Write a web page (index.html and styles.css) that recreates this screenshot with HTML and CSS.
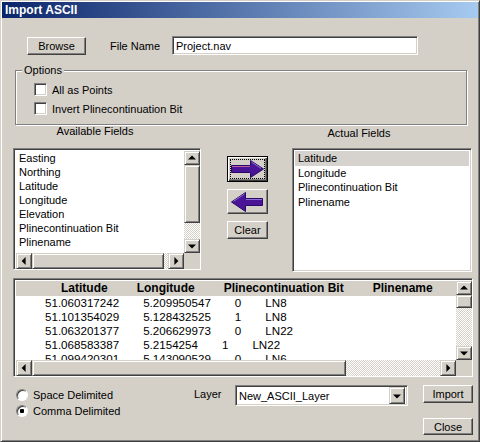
FILE: index.html
```html
<!DOCTYPE html>
<html>
<head>
<meta charset="utf-8">
<title>Import ASCII</title>
<link rel="stylesheet" href="styles.css">
</head>
<body>
<div class="win">
  <div class="title">Import ASCII</div>

  <div class="row-file">
    <div class="btn browse">Browse</div>
    <span class="lbl-file">File Name</span>
    <div class="field textfield">Project.nav</div>
  </div>

  <div class="group">
    <span class="legend">Options</span>
    <div class="chk"><span class="box"></span><span>All as Points</span></div>
    <div class="chk"><span class="box"></span><span>Invert Plinecontinuation Bit</span></div>
  </div>

  <div class="captions">
    <span class="cap-avail">Available Fields</span>
    <span class="cap-actual">Actual Fields</span>
  </div>

  <div class="lists">
    <div class="field listbox avail">
      <div class="items">
        <div class="item">Easting</div>
        <div class="item">Northing</div>
        <div class="item">Latitude</div>
        <div class="item">Longitude</div>
        <div class="item">Elevation</div>
        <div class="item">Plinecontinuation Bit</div>
        <div class="item">Plinename</div>
      </div>
      <div class="vscroll">
        <div class="sb-btn up"></div>
        <div class="thumb" style="height:58px"></div>
        <div class="track"></div>
        <div class="sb-btn down"></div>
      </div>
      <div class="hscroll">
        <div class="sb-btn left"></div>
        <div class="thumb" style="width:132px"></div>
        <div class="track"></div>
        <div class="sb-btn right"></div>
      </div>
      <div class="corner"></div>
    </div>

    <div class="mid">
      <div class="abtn default">
        <span class="focus">
          <svg width="33" height="18" viewBox="0 0 33 18">
            <polygon points="0.5,5.5 19.5,5.5 19.5,0.5 32.5,9 19.5,17.5 19.5,12.5 0.5,12.5" fill="#4a1496" stroke="#2a0868" stroke-width="1"/>
            <line x1="1" y1="6.5" x2="19" y2="6.5" stroke="#c060a0" stroke-width="1"/>
            <line x1="20.5" y1="2" x2="30" y2="8.3" stroke="#9070d8" stroke-width="1"/>
          </svg>
        </span>
      </div>
      <div class="abtn">
        <svg width="33" height="20" viewBox="0 0 33 20">
          <polygon points="0.5,10 14.5,0.5 14.5,6.5 31.5,6.5 31.5,13.5 14.5,13.5 14.5,19.5" fill="#4a1496" stroke="#2a0868" stroke-width="1"/>
          <line x1="2.5" y1="9.3" x2="13.5" y2="2" stroke="#9070d8" stroke-width="1"/>
          <line x1="15" y1="7.5" x2="31" y2="7.5" stroke="#9070d8" stroke-width="1"/>
        </svg>
      </div>
      <div class="btn clear">Clear</div>
    </div>

    <div class="field listbox actual">
      <div class="item sel">Latitude</div>
      <div class="item">Longitude</div>
      <div class="item">Plinecontinuation Bit</div>
      <div class="item">Plinename</div>
    </div>
  </div>

  <div class="field grid">
    <div class="gbody">
      <div class="ghead">
        <span>Latitude</span><span>Longitude</span><span>Plinecontinuation Bit</span><span>Plinename</span>
      </div>
      <div class="grow"><span>51.060317242</span><span>5.209950547</span><span>0</span><span>LN8</span></div>
      <div class="grow"><span>51.101354029</span><span>5.128432525</span><span>1</span><span>LN8</span></div>
      <div class="grow"><span>51.063201377</span><span>5.206629973</span><span>0</span><span>LN22</span></div>
      <div class="grow"><span>51.068583387</span><span>5.2154254</span><span>1</span><span>LN22</span></div>
      <div class="grow"><span>51.099420301</span><span>5.143090529</span><span>0</span><span>LN6</span></div>
    </div>
    <div class="vscroll">
      <div class="sb-btn up"></div>
      <div class="thumb" style="height:13px"></div>
      <div class="track"></div>
      <div class="sb-btn down"></div>
    </div>
    <div class="hscroll">
      <div class="sb-btn left"></div>
      <div class="thumb" style="width:314px"></div>
      <div class="track"></div>
      <div class="sb-btn right"></div>
    </div>
    <div class="corner"></div>
  </div>

  <div class="bottom">
    <div class="radios">
      <div class="radio"><span class="circle"></span><span>Space Delimited</span></div>
      <div class="radio"><span class="circle on"></span><span>Comma Delimited</span></div>
    </div>
    <span class="lbl-layer">Layer</span>
    <div class="field combo">
      <span class="combo-text">New_ASCII_Layer</span>
      <div class="sb-btn down combo-btn"></div>
    </div>
    <div class="actions">
      <div class="btn import">Import</div>
      <div class="btn close">Close</div>
    </div>
  </div>
</div>
</body>
</html>
```
FILE: styles.css
```css
* { box-sizing: border-box; }
html, body { margin: 0; padding: 0; background: #d4d0c8; }
body {
  font-family: "Liberation Sans", Arial, sans-serif;
  font-size: 11px;
  color: #000;
}
.win {
  width: 480px;
  height: 442px;
  background: #d4d0c8;
  border: 1px solid;
  border-color: #d4d0c8 #404040 #404040 #d4d0c8;
  box-shadow: inset 1px 1px 0 #fff, inset -1px -1px 0 #808080;
  padding: 1px;
  overflow: hidden;
}
.title {
  height: 16px;
  line-height: 16px;
  padding-left: 3px;
  color: #fff;
  font-weight: bold;
  font-size: 12px;
  background: linear-gradient(to right, #0a246a, #a6caf0);
}

/* common raised / sunken */
.btn {
  background: #d4d0c8;
  border: 1px solid;
  border-color: #fff #404040 #404040 #fff;
  box-shadow: inset -1px -1px 0 #808080;
  display: flex;
  align-items: center;
  justify-content: center;
  font-size: 11px;
}
.field {
  background: #fff;
  border: 1px solid;
  border-color: #808080 #fff #fff #808080;
  box-shadow: inset 1px 1px 0 #404040, inset -1px -1px 0 #d4d0c8;
}

/* file row */
.row-file {
  display: flex;
  align-items: center;
  height: 19px;
  margin-top: 18px;
  padding-left: 25px;
}
.browse { width: 59px; height: 18px; }
.lbl-file { width: 62px; margin-left: 24px; font-size: 11px; }
.textfield {
  width: 246px;
  height: 19px;
  padding: 2px 3px;
  line-height: 14px;
}

/* options group */
.group {
  position: relative;
  margin-top: 15px;
  margin-left: 13px;
  width: 452px;
  height: 55px;
  border: 1px solid #808080;
  box-shadow: inset 1px 1px 0 #fff, 1px 1px 0 #fff;
  padding: 12px 0 0 18px;
}
.legend {
  position: absolute;
  left: 6px;
  top: -7px;
  padding: 0 2px;
  background: #d4d0c8;
  line-height: 13px;
}
.chk {
  display: flex;
  align-items: center;
  height: 13px;
  margin-bottom: 6px;
}
.box {
  width: 13px;
  height: 13px;
  background: #fff;
  border: 1px solid;
  border-color: #808080 #fff #fff #808080;
  box-shadow: inset 1px 1px 0 #404040, inset -1px -1px 0 #d4d0c8;
  margin-right: 5px;
}

/* captions */
.captions {
  display: flex;
  height: 23px;
  line-height: 13px;
}
.cap-avail { width: 186px; text-align: center; }
.cap-actual { width: 226px; margin-left: 58px; text-align: center; padding-top: 2px; }

/* lists */
.lists { display: flex; align-items: flex-start; }
.listbox { padding: 2px; }
.avail {
  margin-left: 11px;
  width: 188px;
  height: 122px;
  display: grid;
  grid-template-columns: 168px 16px;
  grid-template-rows: 102px 16px;
}
.items { overflow: hidden; padding-left: 3px; }
.item { line-height: 14px; height: 14px; white-space: nowrap; }
.actual {
  margin-left: 24px;
  width: 180px;
  height: 124px;
}
.actual .item { padding-left: 3px; height: 14.5px; line-height: 14.5px; }
.actual .item.sel { background: #d6d3ce; }

.mid {
  margin-left: 26px;
  margin-top: 8px;
  width: 41px;
  display: flex;
  flex-direction: column;
  gap: 7px;
}
.abtn {
  height: 26px;
  background: #d4d0c8;
  border: 1px solid;
  border-color: #fff #404040 #404040 #fff;
  box-shadow: inset -1px -1px 0 #808080;
  display: flex;
  align-items: center;
  justify-content: center;
}
.abtn + .abtn { height: 25px; }
.abtn.default {
  border: 1px solid #000;
  box-shadow: inset 1px 1px 0 #fff, inset -1px -1px 0 #404040, inset -2px -2px 0 #808080;
  padding: 3px;
}
.focus {
  flex: 1;
  height: 100%;
  outline: 1px dotted #000;
  display: flex;
  align-items: center;
  justify-content: center;
}
.clear { height: 18px; }

/* scrollbars */
.vscroll { display: flex; flex-direction: column; width: 16px; }
.hscroll { display: flex; height: 16px; }
.track {
  flex: 1;
  background: repeating-conic-gradient(#d4d0c8 0 25%, #fff 0 50%) 0 0 / 2px 2px;
}
.thumb, .sb-btn, .corner {
  background: #d4d0c8;
}
.thumb, .sb-btn {
  border: 1px solid;
  border-color: #d4d0c8 #404040 #404040 #d4d0c8;
  box-shadow: inset 1px 1px 0 #fff, inset -1px -1px 0 #808080;
  flex: none;
}
.vscroll .sb-btn { height: 14px; }
.hscroll .sb-btn { width: 16px; }
.sb-btn { position: relative; }
.sb-btn::after {
  content: "";
  position: absolute;
  left: 50%;
  top: 50%;
  width: 0;
  height: 0;
  border: 4px solid transparent;
}
.sb-btn.up::after { border-bottom-color: #000; border-top-width: 0; transform: translate(-50%, -60%); }
.sb-btn.down::after { border-top-color: #000; border-bottom-width: 0; transform: translate(-50%, -40%); }
.sb-btn.left::after { border-right-color: #000; border-left-width: 0; transform: translate(-60%, -50%); }
.sb-btn.right::after { border-left-color: #000; border-right-width: 0; transform: translate(-40%, -50%); }

/* grid */
.grid {
  margin-top: 6px;
  margin-left: 11px;
  width: 460px;
  height: 99px;
  padding: 2px;
  display: grid;
  grid-template-columns: 440px 16px;
  grid-template-rows: 79px 16px;
  font-size: 12px;
}
.gbody { overflow: hidden; }
.ghead {
  height: 15px;
  line-height: 15px;
  background: #d4d0c8;
  font-weight: bold;
  display: flex;
  gap: 29px;
  padding-left: 45px;
  white-space: nowrap;
}
.grow {
  height: 14px;
  line-height: 14px;
  display: flex;
  gap: 24px;
  padding-left: 29px;
  white-space: nowrap;
  font-size: 11.6px;
}

/* bottom */
.bottom {
  display: flex;
  align-items: flex-start;
  margin-top: 8px;
}
.radios {
  margin-left: 14px;
  margin-top: 2px;
  width: 178px;
}
.radio {
  display: flex;
  align-items: center;
  height: 16px;
}
.circle {
  width: 12px;
  height: 12px;
  border-radius: 50%;
  background: #fff;
  border: 1px solid;
  border-color: #808080 #fff #fff #808080;
  box-shadow: inset 1px 1px 0 #404040;
  margin-right: 5px;
}
.circle.on {
  background: radial-gradient(circle at 50% 50%, #000 0 2px, #fff 2.5px);
}
.lbl-layer { width: 41px; margin-top: 3px; }
.combo {
  width: 173px;
  height: 21px;
  padding: 2px;
  display: flex;
  align-items: center;
  justify-content: space-between;
}
.combo-text { padding-left: 1px; }
.combo-btn { width: 16px; height: 17px; }
.actions {
  margin-left: 15px;
  width: 50px;
  display: flex;
  flex-direction: column;
}
.import { height: 18px; }
.close { height: 17px; margin-top: 15px; }
```
